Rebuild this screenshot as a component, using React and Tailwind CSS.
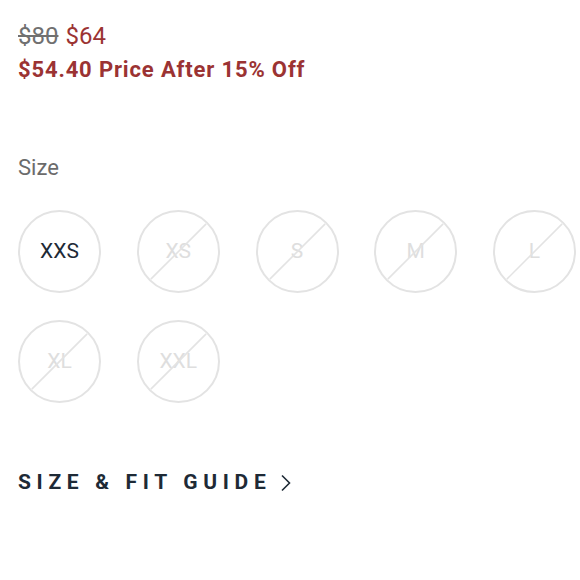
const sizes = [
  { label: 'XXS', available: true },
  { label: 'XS', available: false },
  { label: 'S', available: false },
  { label: 'M', available: false },
  { label: 'L', available: false },
  { label: 'XL', available: false },
  { label: 'XXL', available: false },
];

function SizeChip({ label, available }) {
  return (
    <div className="relative w-[83px] h-[83px] rounded-full border-2 border-[#e3e3e3] flex items-center justify-center">
      <span className={available ? 'text-[21px] text-[#1e2a36]' : 'text-[21px] text-[#dedede]'}>{label}</span>
      {!available && (
        <svg className="absolute inset-0" width="79" height="79" viewBox="0 0 80 80">
          <line x1="12" y1="68" x2="68" y2="12" stroke="#e3e3e3" strokeWidth="1.6" />
        </svg>
      )}
    </div>
  );
}

export default function App() {
  return (
    <div className="w-[580px] h-[580px] bg-white px-[18px] pt-[21px]" style={{ fontFamily: 'Roboto, "Liberation Sans", sans-serif' }}>
      <div className="flex items-baseline gap-[7px] text-[24px] leading-[30px]">
        <span className="line-through text-[#707070]">$80</span>
        <span className="text-[#9b3333]">$64</span>
      </div>
      <div className="text-[22px] font-bold text-[#9b3333] leading-[30px] mt-[4px] tracking-[0.85px]">
        $54.40 Price After 15% Off
      </div>

      <div className="mt-[69px] text-[22px] text-[#6b6b6b] leading-[28px]">Size</div>

      <div className="mt-[28px] grid grid-cols-[repeat(5,83px)] gap-x-[35.75px] gap-y-[27px]">
        {sizes.map((s) => (
          <SizeChip key={s.label} {...s} />
        ))}
      </div>

      <div className="mt-[64px] flex items-center gap-[9px]">
        <span className="text-[21px] font-bold tracking-[0.27em] text-[#1e2a36]">SIZE &amp; FIT GUIDE</span>
        <svg width="12" height="18" viewBox="0 0 12 18">
          <path d="M2 1.5 L9.5 9 L2 16.5" fill="none" stroke="#1e2a36" strokeWidth="1.6" />
        </svg>
      </div>
    </div>
  );
}
